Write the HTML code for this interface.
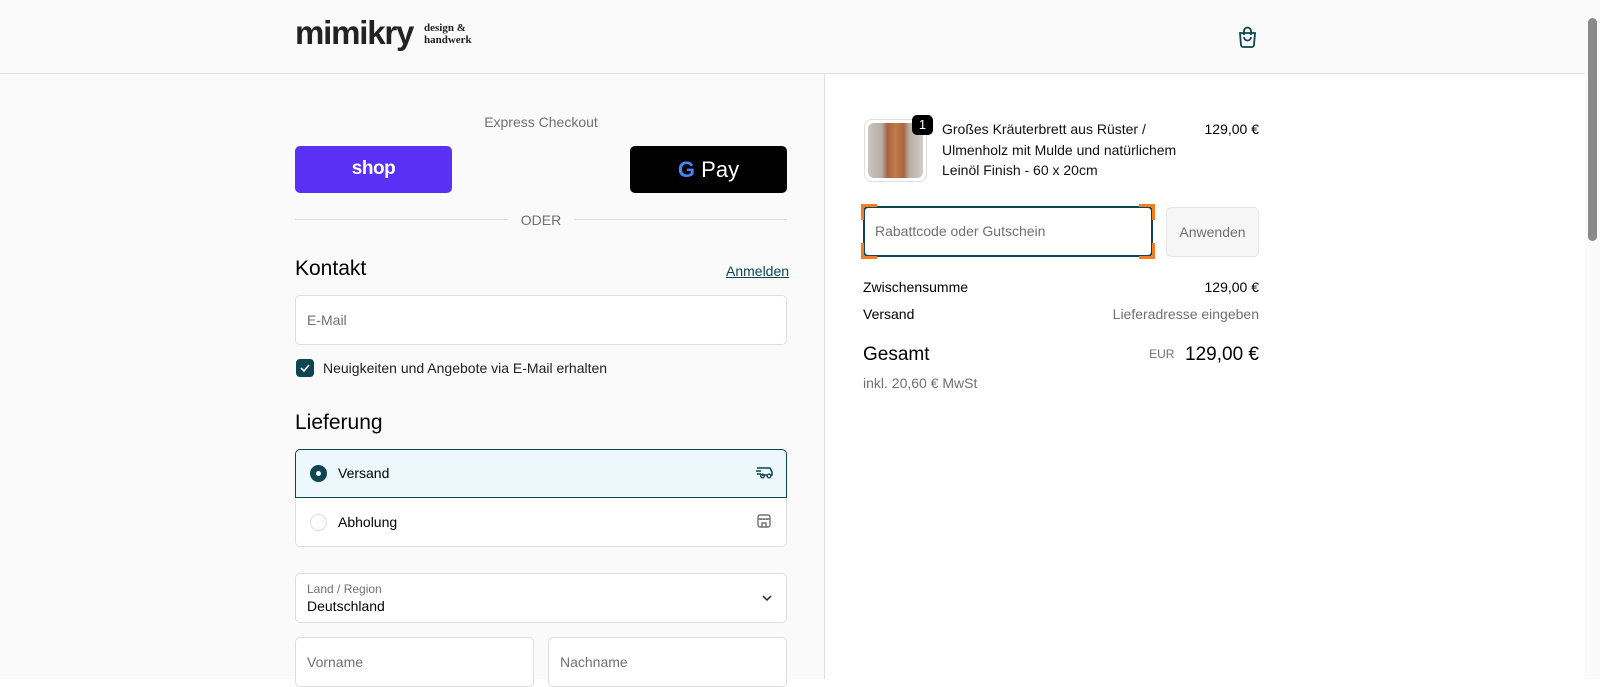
<!DOCTYPE html>
<html><head><meta charset="utf-8"><style>
*{box-sizing:border-box;margin:0;padding:0}
body{width:1600px;height:679px;overflow:hidden;font-family:"Liberation Sans",sans-serif;background:#fff;position:relative;color:#000}
.hdr{position:absolute;left:0;top:0;width:1585px;height:74px;background:#fafafa;border-bottom:1px solid #dedede}
.left{position:absolute;left:0;top:74px;width:825px;height:605px;background:#fafafa;border-right:1px solid #dedede}
.sb{position:absolute;left:1585px;top:0;width:15px;height:679px;background:#fafafa}
.thumb{position:absolute;left:1588px;top:18px;width:9px;height:223px;background:#8a8a8a;border-radius:5px}
.abs{position:absolute}
.inp{position:absolute;background:#fff;border:1px solid #dedede;border-radius:5px;font-size:14px;color:#707070}
</style></head><body>
<div class="hdr"></div>
<div class="abs" style="left:295px;top:15px;font-size:33px;font-weight:bold;letter-spacing:-1.2px;color:#222;line-height:36px">mimikry</div>
<div class="abs" style="left:424px;top:22px;font-family:'Liberation Serif',serif;font-size:11px;line-height:12px;font-weight:bold;color:#222">design &amp;<br>handwerk</div>
<svg class="abs" style="left:1237px;top:26px" width="21" height="22" viewBox="0 0 21 22"><path d="M3 7h15l-1 12a2 2 0 0 1-2 2H6a2 2 0 0 1-2-2z M7 9V5a3.5 3.5 0 0 1 7 0v4 M7 11a3.5 3.5 0 0 0 7 0" fill="none" stroke="#0d4652" stroke-width="1.8"/></svg>
<div class="left"></div>
<div class="sb"></div><div class="thumb"></div>
<div class="abs" style="left:295px;top:114px;width:492px;text-align:center;font-size:14px;color:#707070">Express Checkout</div>
<div class="abs" style="left:295px;top:146px;width:157px;height:47px;background:#5a31f4;border-radius:5px;color:#fff;font-weight:bold;font-size:19px;text-align:center;line-height:45px;letter-spacing:-0.5px">shop</div>
<div class="abs" style="left:630px;top:146px;width:157px;height:47px;background:#000;border-radius:5px;color:#fff;font-size:22px;text-align:center;line-height:47px"><span style="font-weight:bold;color:#4285f4">G</span> Pay</div>
<div class="abs" style="left:295px;top:219px;width:213px;height:1px;background:#dedede"></div>
<div class="abs" style="left:574px;top:219px;width:213px;height:1px;background:#dedede"></div>
<div class="abs" style="left:508px;top:212px;width:66px;text-align:center;font-size:14px;color:#707070">ODER</div>
<div class="abs" style="left:295px;top:257px;font-size:21px">Kontakt</div>
<div class="abs" style="left:726px;top:263px;font-size:14px;color:#0d4652;text-decoration:underline">Anmelden</div>
<div class="inp" style="left:295px;top:295px;width:492px;height:50px;padding:16px 11px">E-Mail</div>
<div class="abs" style="left:296px;top:359px;width:18px;height:18px;background:#0d4652;border-radius:4px"><svg width="18" height="18"><path d="M5 9l3 3 5-6" fill="none" stroke="#fff" stroke-width="1.6"/></svg></div>
<div class="abs" style="left:323px;top:360px;font-size:14px;color:#222">Neuigkeiten und Angebote via E-Mail erhalten</div>
<div class="abs" style="left:295px;top:411px;font-size:21px">Lieferung</div>
<div class="abs" style="left:295px;top:449px;width:492px;height:98px;border:1px solid #dedede;border-radius:5px;background:#fff"></div>
<div class="abs" style="left:295px;top:449px;width:492px;height:49px;border:1px solid #0d4652;border-radius:5px 5px 0 0;background:#edf8fd"></div>
<div class="abs" style="left:310px;top:465px;width:17px;height:17px;border-radius:50%;background:#0d4652"><div style="margin:6px;width:5px;height:5px;border-radius:50%;background:#fff"></div></div>
<div class="abs" style="left:338px;top:465px;font-size:14px">Versand</div>
<svg class="abs" style="left:755px;top:464px" width="19" height="16" viewBox="0 0 19 16"><path d="M2 4h9l4 0 2 4v3h-2 M1 7h5 M2 10h4 M7 11h5" fill="none" stroke="#0d4652" stroke-width="1.5"/><circle cx="7.5" cy="12" r="1.8" fill="none" stroke="#0d4652" stroke-width="1.4"/><circle cx="14" cy="12" r="1.8" fill="none" stroke="#0d4652" stroke-width="1.4"/></svg>
<div class="abs" style="left:310px;top:514px;width:17px;height:17px;border-radius:50%;border:1px solid #dedede;background:#fff"></div>
<div class="abs" style="left:338px;top:514px;font-size:14px">Abholung</div>
<svg class="abs" style="left:756px;top:513px" width="16" height="16" viewBox="0 0 16 16"><rect x="2" y="2" width="12" height="12" rx="2" fill="none" stroke="#707070" stroke-width="1.4"/><path d="M2 6h12 M6 14v-4h4v4 M5 6v1 M8 6v1 M11 6v1" fill="none" stroke="#707070" stroke-width="1.4"/></svg>
<div class="inp" style="left:295px;top:573px;width:492px;height:50px;padding:8px 11px"><div style="font-size:12px;color:#707070">Land / Region</div><div style="color:#000;font-size:14px;margin-top:2px">Deutschland</div></div>
<svg class="abs" style="left:761px;top:594px" width="12" height="8"><path d="M2 2l4 4 4-4" fill="none" stroke="#222" stroke-width="1.5"/></svg>
<div class="inp" style="left:295px;top:637px;width:239px;height:50px;padding:16px 11px">Vorname</div>
<div class="inp" style="left:548px;top:637px;width:239px;height:50px;padding:16px 11px">Nachname</div>

<div class="abs" style="left:864px;top:119px;width:63px;height:63px;border:1px solid #dedede;border-radius:8px;background:#fff;padding:3px"><div style="width:100%;height:100%;border-radius:6px;background:linear-gradient(90deg,#c9c5c0 0,#b8aea6 25%,#a5663f 35%,#c17a4c 50%,#a5663f 65%,#b8aea6 75%,#d0ccc8 100%)"></div></div>
<div class="abs" style="left:912px;top:115px;width:21px;height:20px;background:#000;border-radius:5px;color:#fff;font-size:13px;text-align:center;line-height:20px">1</div>
<div class="abs" style="left:942px;top:119px;width:250px;font-size:14px;line-height:20.5px;color:#111">Großes Kräuterbrett aus Rüster / Ulmenholz mit Mulde und natürlichem Leinöl Finish - 60 x 20cm</div>
<div class="abs" style="left:1180px;top:121px;width:79px;text-align:right;font-size:14px">129,00 €</div>
<div class="abs" style="left:863px;top:206px;width:290px;height:51px;border:2px solid #0d4652;border-radius:5px;background:#fff;padding:15px 10px;font-size:14px;color:#707070">Rabattcode oder Gutschein</div>
<div class="abs" style="left:861px;top:204px;width:16px;height:16px;border-left:3px solid #f57c21;border-top:3px solid #f57c21"></div>
<div class="abs" style="left:1139px;top:204px;width:16px;height:16px;border-right:3px solid #f57c21;border-top:3px solid #f57c21"></div>
<div class="abs" style="left:861px;top:243px;width:16px;height:16px;border-left:3px solid #f57c21;border-bottom:3px solid #f57c21"></div>
<div class="abs" style="left:1139px;top:243px;width:16px;height:16px;border-right:3px solid #f57c21;border-bottom:3px solid #f57c21"></div>
<div class="abs" style="left:1166px;top:207px;width:93px;height:50px;border:1px solid #e6e6e6;border-radius:5px;background:#f6f6f6;font-size:14px;color:#707070;text-align:center;line-height:48px">Anwenden</div>
<div class="abs" style="left:863px;top:279px;font-size:14px">Zwischensumme</div>
<div class="abs" style="left:1150px;top:279px;width:109px;text-align:right;font-size:14px">129,00 €</div>
<div class="abs" style="left:863px;top:306px;font-size:14px">Versand</div>
<div class="abs" style="left:1050px;top:306px;width:209px;text-align:right;font-size:14px;color:#707070">Lieferadresse eingeben</div>
<div class="abs" style="left:863px;top:344px;font-size:19px">Gesamt</div>
<div class="abs" style="left:1100px;top:344px;width:159px;text-align:right;font-size:19px"><span style="font-size:12px;color:#707070;vertical-align:2px">EUR</span>&nbsp; 129,00 €</div>
<div class="abs" style="left:863px;top:375px;font-size:14px;color:#707070">inkl. 20,60 € MwSt</div>
</body></html>
